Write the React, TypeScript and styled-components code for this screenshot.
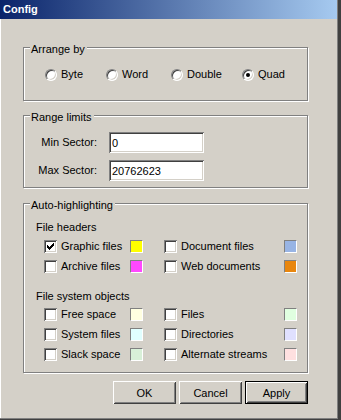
import React from "react";
import styled, { createGlobalStyle, css } from "styled-components";

const GlobalStyle = createGlobalStyle`
  html, body {
    margin: 0;
    padding: 0;
    background: #d4d0c8;
  }
  body {
    font-family: "Liberation Sans", Arial, sans-serif;
    font-size: 11px;
    color: #000;
  }
`;

const sunken = css`
  box-shadow: inset 1px 1px #808080, inset -1px -1px #fff, inset 2px 2px #404040,
    inset -2px -2px #d4d0c8;
`;

const Window = styled.div`
  width: 341px;
  height: 420px;
  box-sizing: border-box;
  border-right: 3px solid #404040;
  border-bottom: 1px solid #404040;
  display: flex;
`;

const Frame = styled.div`
  flex: 1;
  display: flex;
  flex-direction: column;
  border-right: 1px solid #808080;
  border-bottom: 1px solid #808080;
  background: #d4d0c8;
`;

const TitleBar = styled.div`
  flex: none;
  height: 19px;
  padding-left: 3px;
  background: linear-gradient(to right, #0a246a, #a6caf0);
  color: #fff;
  font-weight: bold;
  font-size: 11px;
  line-height: 19px;
`;

const Body = styled.div`
  flex: 1;
  display: flex;
  flex-direction: column;
  border-left: 1px solid #fff;
  padding: 20px 29px 0 22px;
`;

const Group = styled.fieldset<{ $gap?: number }>`
  margin: ${(p) => p.$gap ?? 0}px 0 0 0;
  padding: 0;
  min-width: 0;
  border: 1px solid #808080;
  box-shadow: inset 1px 1px 0 #fff, 1px 1px 0 #fff;
`;

const Legend = styled.legend`
  margin-left: 6px;
  padding: 4px 2px 0 1px;
  line-height: 13px;
  background: #d4d0c8;
`;

const RadioRow = styled.div`
  display: grid;
  grid-template-columns: 61px 65px 71px auto;
  align-items: center;
  height: 13px;
  padding: 12px 0 19px 21px;
`;

const Option = styled.label`
  display: flex;
  align-items: center;
  gap: 4px;
  line-height: 13px;
  white-space: nowrap;
`;

const RadioDot = styled.span<{ $on?: boolean }>`
  flex: none;
  width: 12px;
  height: 12px;
  box-sizing: border-box;
  border-radius: 50%;
  background: #fff;
  border: 1px solid;
  border-color: #808080 #fff #fff #808080;
  box-shadow: inset 1px 1px #404040, inset -1px -1px #d4d0c8;
  display: flex;
  align-items: center;
  justify-content: center;

  &::after {
    content: "";
    width: 4px;
    height: 4px;
    border-radius: 50%;
    background: #000;
    display: ${(p) => (p.$on ? "block" : "none")};
  }
`;

const RangeGrid = styled.div`
  display: grid;
  grid-template-columns: 73px 95px;
  column-gap: 12px;
  row-gap: 7px;
  align-items: center;
  padding: 8px 0 6px 0;
`;

const FieldLabel = styled.label`
  text-align: right;
  line-height: 13px;
  white-space: nowrap;
`;

const Field = styled.input`
  width: 95px;
  height: 21px;
  box-sizing: border-box;
  margin: 0;
  padding: 0 3px;
  border: none;
  outline: none;
  background: #fff;
  font: 11px "Liberation Sans", Arial, sans-serif;
  color: #000;
  ${sunken}
`;

const HighlightBody = styled.div`
  display: flex;
  flex-direction: column;
  padding: 9px 0 11px 0;
`;

const Subhead = styled.div<{ $top?: number }>`
  margin-top: ${(p) => p.$top ?? 0}px;
  padding-left: 12px;
  line-height: 13px;
`;

const CheckGrid = styled.div<{ $top: number }>`
  display: grid;
  grid-template-columns: 86px 34px 120px 13px;
  row-gap: 7px;
  align-items: center;
  margin-top: ${(p) => p.$top}px;
  padding-left: 20px;
`;

const Box = styled.span`
  flex: none;
  width: 13px;
  height: 13px;
  box-sizing: border-box;
  background: #fff;
  display: flex;
  align-items: center;
  justify-content: center;
  ${sunken}
`;

const Swatch = styled.span<{ $color: string }>`
  width: 13px;
  height: 13px;
  box-sizing: border-box;
  background: ${(p) => p.$color};
  border: 1px solid;
  border-color: #808080 #fff #fff #808080;
`;

const ButtonRow = styled.div`
  display: flex;
  justify-content: flex-end;
  gap: 3px;
  margin-top: 8px;
`;

const Button = styled.button<{ $default?: boolean }>`
  width: 63px;
  height: 23px;
  box-sizing: border-box;
  margin: 0;
  padding: 0;
  border: ${(p) => (p.$default ? "1px solid #000" : "none")};
  background: #d4d0c8;
  font: 11px "Liberation Sans", Arial, sans-serif;
  color: #000;
  box-shadow: inset 1px 1px #fff, inset -1px -1px #404040, inset 2px 2px #d4d0c8,
    inset -2px -2px #808080;
`;

const Tick = () => (
  <svg width="7" height="7" viewBox="0 0 7 7" shapeRendering="crispEdges">
    {[2, 3, 4, 3, 2, 1, 0].map((y, x) => (
      <rect key={x} x={x} y={y} width="1" height="3" fill="#000" />
    ))}
  </svg>
);

const CheckItem = ({ label, on }: { label: string; on?: boolean }) => (
  <Option>
    <Box>{on && <Tick />}</Box>
    {label}
  </Option>
);

type Pair = { label: string; color: string; on?: boolean };

const headers: [Pair, Pair][] = [
  [
    { label: "Graphic files", color: "#ffff00", on: true },
    { label: "Document files", color: "#98b4e4" },
  ],
  [
    { label: "Archive files", color: "#ff48ff" },
    { label: "Web documents", color: "#e8860e" },
  ],
];

const fsObjects: [Pair, Pair][] = [
  [
    { label: "Free space", color: "#ffffe0" },
    { label: "Files", color: "#e0ffe0" },
  ],
  [
    { label: "System files", color: "#e0ffff" },
    { label: "Directories", color: "#e0e0ff" },
  ],
  [
    { label: "Slack space", color: "#d8f0d8" },
    { label: "Alternate streams", color: "#ffe0e0" },
  ],
];

const CheckRows = ({ rows, top }: { rows: [Pair, Pair][]; top: number }) => (
  <CheckGrid $top={top}>
    {rows.map(([a, b]) => (
      <React.Fragment key={a.label}>
        <CheckItem label={a.label} on={a.on} />
        <Swatch $color={a.color} />
        <CheckItem label={b.label} on={b.on} />
        <Swatch $color={b.color} />
      </React.Fragment>
    ))}
  </CheckGrid>
);

export default function App() {
  return (
    <>
      <GlobalStyle />
      <Window>
        <Frame>
          <TitleBar>Config</TitleBar>
          <Body>
            <Group>
              <Legend>Arrange by</Legend>
              <RadioRow>
                {["Byte", "Word", "Double", "Quad"].map((name) => (
                  <Option key={name}>
                    <RadioDot $on={name === "Quad"} />
                    {name}
                  </Option>
                ))}
              </RadioRow>
            </Group>

            <Group $gap={6}>
              <Legend>Range limits</Legend>
              <RangeGrid>
                <FieldLabel>Min Sector:</FieldLabel>
                <Field defaultValue="0" />
                <FieldLabel>Max Sector:</FieldLabel>
                <Field defaultValue="20762623" />
              </RangeGrid>
            </Group>

            <Group $gap={7}>
              <Legend>Auto-highlighting</Legend>
              <HighlightBody>
                <Subhead>File headers</Subhead>
                <CheckRows rows={headers} top={6} />
                <Subhead $top={17}>File system objects</Subhead>
                <CheckRows rows={fsObjects} top={5} />
              </HighlightBody>
            </Group>

            <ButtonRow>
              <Button>OK</Button>
              <Button>Cancel</Button>
              <Button $default>Apply</Button>
            </ButtonRow>
          </Body>
        </Frame>
      </Window>
    </>
  );
}
